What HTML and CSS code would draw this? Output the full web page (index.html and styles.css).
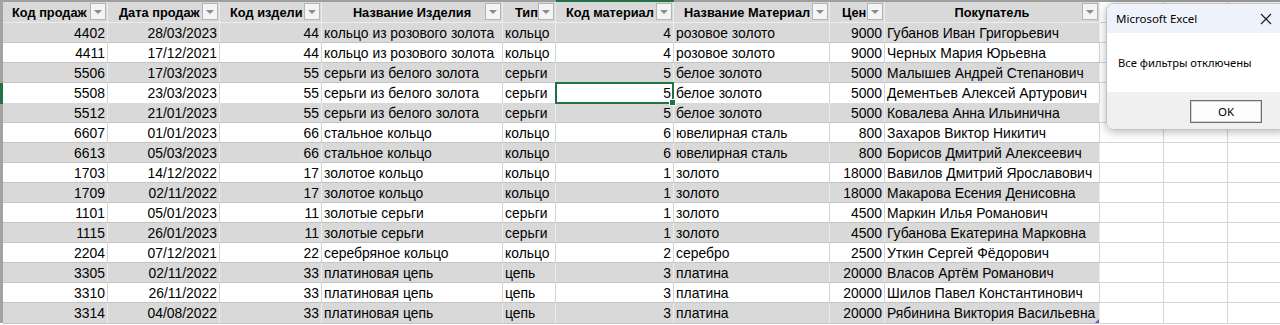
FILE: index.html
```html
<!DOCTYPE html>
<html lang="ru">
<head>
<meta charset="utf-8">
<title>Excel</title>
<link rel="stylesheet" href="styles.css">
</head>
<body>
<div class="sheet">
  <div class="topstrip"><div class="topsel"></div></div>
  <div class="table">
    <div class="row head">
      <div class="cell h"><span class="ht" style="padding-left:9px">Код продаж</span><i class="fb"></i></div>
      <div class="cell h"><span class="ht" style="padding-left:11px">Дата продаж</span><i class="fb"></i></div>
      <div class="cell h"><span class="ht" style="padding-left:10px">Код издели</span><i class="fb"></i></div>
      <div class="cell h"><span class="ht c">Название Изделия</span><i class="fb"></i></div>
      <div class="cell h"><span class="ht" style="padding-left:12px">Тип</span><i class="fb"></i></div>
      <div class="cell h"><span class="ht" style="padding-left:10px">Код материал</span><i class="fb"></i></div>
      <div class="cell h"><span class="ht" style="padding-left:10px">Название Материал</span><i class="fb"></i></div>
      <div class="cell h"><span class="ht" style="padding-left:12px">Цен</span><i class="fb"></i></div>
      <div class="cell h"><span class="ht c">Покупатель</span><i class="fb"></i></div>
      <div class="cell e"></div><div class="cell e"></div><div class="cell e"></div>
    </div>
  </div>
  <div class="table" id="body"></div>
</div>

<div class="dialog">
  <div class="dtitle">
    <span>Microsoft Excel</span>
    <svg class="close" width="12" height="12" viewBox="0 0 12 12"><path d="M1 1 L11 11 M11 1 L1 11" stroke="#1a1a1a" stroke-width="1.1" fill="none"/></svg>
  </div>
  <div class="dbody">Все фильтры отключены</div>
  <div class="dfoot"><button class="ok">OK</button></div>
</div>
<script src="app.js"></script>
</body>
</html>
```
FILE: app.js
```js
const data = [
["4402","28/03/2023","44","кольцо из розового золота","кольцо","4","розовое золото","9000","Губанов Иван Григорьевич"],
["4411","17/12/2021","44","кольцо из розового золота","кольцо","4","розовое золото","9000","Черных Мария Юрьевна"],
["5506","17/03/2023","55","серьги из белого золота","серьги","5","белое золото","5000","Малышев Андрей Степанович"],
["5508","23/03/2023","55","серьги из белого золота","серьги","5","белое золото","5000","Дементьев Алексей Артурович"],
["5512","21/01/2023","55","серьги из белого золота","серьги","5","белое золото","5000","Ковалева Анна Ильинична"],
["6607","01/01/2023","66","стальное кольцо","кольцо","6","ювелирная сталь","800","Захаров Виктор Никитич"],
["6613","05/03/2023","66","стальное кольцо","кольцо","6","ювелирная сталь","800","Борисов Дмитрий Алексеевич"],
["1703","14/12/2022","17","золотое кольцо","кольцо","1","золото","18000","Вавилов Дмитрий Ярославович"],
["1709","02/11/2022","17","золотое кольцо","кольцо","1","золото","18000","Макарова Есения Денисовна"],
["1101","05/01/2023","11","золотые серьги","серьги","1","золото","4500","Маркин Илья Романович"],
["1115","26/01/2023","11","золотые серьги","серьги","1","золото","4500","Губанова Екатерина Марковна"],
["2204","07/12/2021","22","серебряное кольцо","кольцо","2","серебро","2500","Уткин Сергей Фёдорович"],
["3305","02/11/2022","33","платиновая цепь","цепь","3","платина","20000","Власов Артём Романович"],
["3310","26/11/2022","33","платиновая цепь","цепь","3","платина","20000","Шилов Павел Константинович"],
["3314","04/08/2022","33","платиновая цепь","цепь","3","платина","20000","Рябинина Виктория Васильевна"]
];
const numCols = new Set([0,1,2,5,7]);
const body = document.getElementById("body");
data.forEach((r, i) => {
  const row = document.createElement("div");
  row.className = "row " + (i % 2 === 0 ? "band" : "plain") + (i === 3 ? " selrow" : "");
  r.forEach((v, j) => {
    const c = document.createElement("div");
    c.className = "cell" + (numCols.has(j) ? " num" : " txt");
    if (i === 3 && j === 5) c.classList.add("active");
    if (i === data.length - 1 && j === 8) c.classList.add("last");
    c.textContent = v;
    row.appendChild(c);
  });
  for (let k = 0; k < 3; k++) {
    const e = document.createElement("div");
    e.className = "cell e";
    row.appendChild(e);
  }
  body.appendChild(row);
});
```
FILE: styles.css
```css
html, body {
  margin: 0;
  padding: 0;
  background: #ffffff;
  overflow: hidden;
}
body {
  width: 1280px;
  height: 325px;
  font-family: "Liberation Sans", Arial, sans-serif;
  color: #000;
  position: relative;
}
.sheet {
  border-left: 3px solid #a3a3a3;
  width: 1290px;
}
.topstrip {
  height: 2px;
  background: #9e9e9e;
  position: relative;
}
.topsel {
  position: absolute;
  left: 553px;
  width: 118px;
  top: 0;
  height: 2px;
  background: #217346;
}
.table {
  display: flex;
  flex-direction: column;
}
.row {
  display: grid;
  grid-template-columns: 105px 112px 102px 181px 53px 118px 156px 55px 215px 64px 64px 64px;
  height: 20px;
}
.row.head {
  height: 21px;
}
.cell {
  box-sizing: border-box;
  border-right: 1px solid #d4d4d4;
  border-bottom: 1px solid #c4c4c4;
  font-size: 13.9px;
  line-height: 19px;
  padding-top: 1px;
  white-space: nowrap;
  overflow: hidden;
  position: relative;
}
.band .cell { background: #d9d9d9; border-right-color: #ececec; }
.plain .cell { background: #ffffff; }
.row .cell.e { background: #fff; border-right-color: #d4d4d4; border-bottom-color: #d4d4d4; }
.num { text-align: right; padding-right: 2px; }
.txt { padding-left: 2px; }
.head .cell.h {
  background: #d9d9d9;
  border-right-color: #ececec;
  border-bottom-color: #ececec;
  font-weight: bold;
  font-size: 12.8px;
  line-height: 20px;
  padding-top: 0;
}
.ht {
  position: absolute;
  left: 0;
  top: 1px;
  right: 17px;
  overflow: hidden;
  white-space: nowrap;
}
.ht.c { text-align: center; right: 0; }
.fb {
  position: absolute;
  right: 1px;
  top: 1px;
  width: 16px;
  height: 17px;
  box-sizing: border-box;
  border: 1px solid #b4b4b4;
  background: #f4f4f4;
}
.fb::after {
  content: "";
  position: absolute;
  left: 3px;
  top: 6px;
  border-left: 4px solid transparent;
  border-right: 4px solid transparent;
  border-top: 4px solid #8a8a8a;
}
.selrow .cell:first-child { box-shadow: -3px 0 0 #217346; }
.cell.active {
  overflow: visible;
  z-index: 2;
}
.cell.active::before {
  content: "";
  position: absolute;
  left: -1px;
  top: -1px;
  right: -1px;
  bottom: -1px;
  border: 2px solid #217346;
  pointer-events: none;
}
.cell.active::after {
  content: "";
  position: absolute;
  right: -3px;
  bottom: -3px;
  width: 5px;
  height: 5px;
  background: #217346;
  border: 1px solid #fff;
}
.cell.last { overflow: visible; }
.cell.last::after {
  content: "";
  position: absolute;
  right: 0;
  bottom: 0;
  width: 0;
  height: 0;
  border-left: 4px solid transparent;
  border-bottom: 4px solid #4a5fc1;
}
.dialog {
  position: absolute;
  left: 1106px;
  top: 3px;
  width: 182px;
  height: 127px;
  box-sizing: border-box;
  border: 1px solid #c2c2c2;
  border-radius: 8px;
  overflow: hidden;
  box-shadow: 0 2px 10px rgba(0,0,0,0.28);
  font-family: "Noto Sans", "Open Sans", sans-serif;
  font-size: 11.5px;
  display: flex;
  flex-direction: column;
}
.dtitle {
  height: 29px;
  background: #eef2fa;
  display: flex;
  align-items: center;
  padding-left: 9px;
  position: relative;
}
.close {
  position: absolute;
  left: 153px;
  top: 9px;
}
.dbody {
  height: 59px;
  background: #fff;
  display: flex;
  align-items: center;
  padding-left: 11px;
  font-size: 11.2px;
}
.dfoot {
  flex: 1;
  background: #f0f0f0;
  padding: 8px 0 0 83px;
}
.ok {
  width: 72px;
  height: 23px;
  box-sizing: border-box;
  border: 1px solid #6d6d6d;
  box-shadow: inset 0 0 0 1px #d6d6d6;
  background: #fdfdfd;
  font-family: "Noto Sans", "Open Sans", sans-serif;
  font-size: 11.5px;
  padding: 0;
  color: #000;
}
```
